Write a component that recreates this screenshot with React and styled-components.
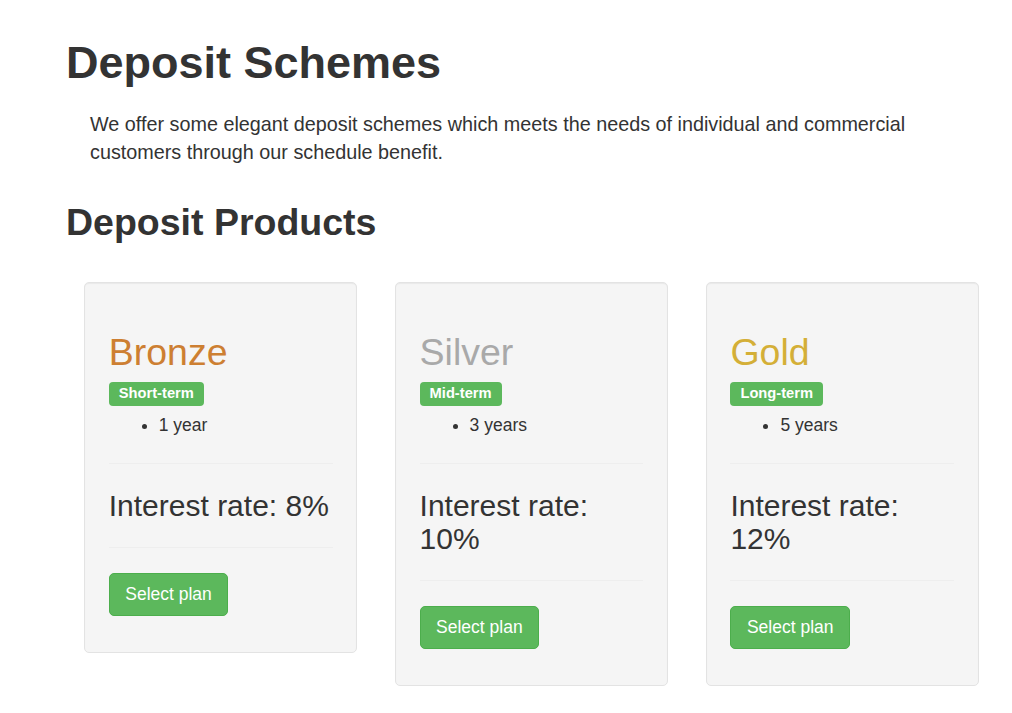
import React from "react";
import styled, { createGlobalStyle } from "styled-components";

const GlobalStyle = createGlobalStyle`
  body {
    margin: 0;
    background: #fff;
    color: #333;
    font-family: "Liberation Sans", Arial, sans-serif;
    font-size: 17.5px;
    line-height: 1.42857;
  }
  * { box-sizing: border-box; }
`;

const Page = styled.div`
  width: 931.5px;
  margin-left: 66px;
  padding-top: 12.5px;
  padding-bottom: 30px;
`;

const Title = styled.h1`
  margin: 25px 0 0;
  font-size: 45px;
  line-height: 1.1;
  font-weight: 700;
`;

const Intro = styled.p`
  margin: 23px 0 0 24px;
  max-width: 840px;
  font-size: 19.8px;
  line-height: 28px;
`;

const SectionTitle = styled.h2`
  margin: 36px 0 39px;
  font-size: 37.5px;
  line-height: 1.1;
  font-weight: 700;
`;

const CardGrid = styled.div`
  display: grid;
  grid-template-columns: repeat(3, 1fr);
  column-gap: 37.5px;
  padding: 0 18.5px 0 18px;
  align-items: start;
`;

const Card = styled.div`
  background: #f5f5f5;
  border: 1px solid #e3e3e3;
  border-radius: 5px;
  box-shadow: inset 0 1px 1px rgba(0, 0, 0, 0.05);
  padding: 23.75px;
`;

const PlanName = styled.h2`
  margin: 25px 0 8.5px;
  font-size: 37.5px;
  line-height: 1.1;
  font-weight: 400;
  color: ${(props) => props.tone};
`;

const TermRow = styled.div`
  display: flex;
`;

const TermLabel = styled.span`
  display: inline-block;
  background: #5cb85c;
  color: #fff;
  font-size: 14.7px;
  font-weight: 700;
  line-height: 15px;
  padding: 4px 10px 5px;
  border-radius: 4px;
`;

const Duration = styled.ul`
  margin: 7px 0 0;
  padding-left: 50px;
  line-height: 25px;
`;

const Divider = styled.hr`
  margin: 25px 0;
  border: 0;
  border-top: 1px solid #eee;
`;

const Rate = styled.h3`
  margin: 25px 0 12.5px;
  font-size: 30px;
  line-height: 1.1;
  font-weight: 400;
`;

const Actions = styled.p`
  margin: 0 0 12.5px;
`;

const SelectButton = styled.button`
  font-family: inherit;
  font-size: 17.5px;
  line-height: 25px;
  color: #fff;
  background: #5cb85c;
  border: 1px solid #4cae4c;
  border-radius: 5px;
  padding: 8px 15.5px;
  cursor: pointer;
`;

const plans = [
  { name: "Bronze", tone: "#cd7f32", term: "Short-term", years: "1 year", rate: "8%" },
  { name: "Silver", tone: "#a9a9a9", term: "Mid-term", years: "3 years", rate: "10%" },
  { name: "Gold", tone: "#d4af37", term: "Long-term", years: "5 years", rate: "12%" },
];

export default function App() {
  return (
    <>
      <GlobalStyle />
      <Page>
        <Title>Deposit Schemes</Title>
        <Intro>
          We offer some elegant deposit schemes which meets the needs of individual and
          commercial customers through our schedule benefit.
        </Intro>
        <SectionTitle>Deposit Products</SectionTitle>
        <CardGrid>
          {plans.map((plan) => (
            <Card key={plan.name}>
              <PlanName tone={plan.tone}>{plan.name}</PlanName>
              <TermRow>
                <TermLabel>{plan.term}</TermLabel>
              </TermRow>
              <Duration>
                <li>{plan.years}</li>
              </Duration>
              <Divider />
              <Rate>Interest rate: {plan.rate}</Rate>
              <Divider />
              <Actions>
                <SelectButton>Select plan</SelectButton>
              </Actions>
            </Card>
          ))}
        </CardGrid>
      </Page>
    </>
  );
}
